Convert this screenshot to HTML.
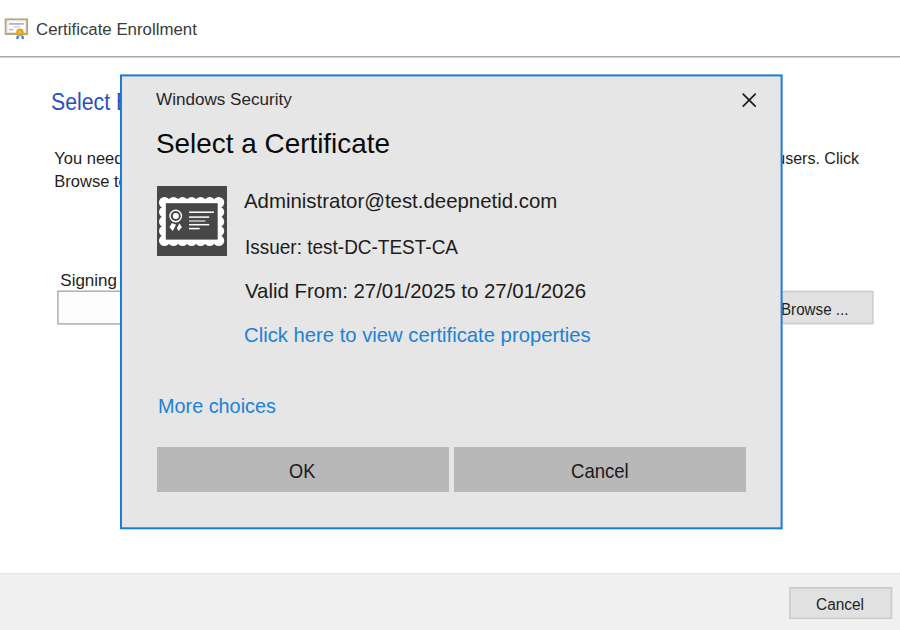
<!DOCTYPE html>
<html><head><meta charset="utf-8"><style>
html,body{margin:0;padding:0;}
body{width:900px;height:630px;overflow:hidden;background:#fff;position:relative;font-family:"Liberation Sans",sans-serif;}
.t{position:absolute;white-space:nowrap;line-height:1;transform-origin:0 0;}
.abs{position:absolute;}
</style></head><body>
<svg class="abs" style="left:0;top:10px" width="34" height="34" viewBox="0 10 34 34">
<rect x="5.7" y="19.4" width="21.4" height="14.6" fill="#fff" stroke="#b7a786" stroke-width="2"/>
<rect x="7.2" y="20.9" width="18.4" height="11.6" fill="none" stroke="#ece6da" stroke-width="1"/>
<line x1="9" y1="23.9" x2="23.7" y2="23.9" stroke="#a9b2dc" stroke-width="1.8"/>
<line x1="13.7" y1="26.8" x2="20" y2="26.8" stroke="#d2d5e4" stroke-width="1.5"/>
<line x1="9" y1="29.6" x2="13.3" y2="29.6" stroke="#aeb6dc" stroke-width="1.5"/>
<ellipse cx="17.6" cy="37.3" rx="1.3" ry="2.1" transform="rotate(18 17.6 37.3)" fill="#3f7eee"/>
<ellipse cx="22.6" cy="37.2" rx="1.3" ry="2.1" transform="rotate(-18 22.6 37.2)" fill="#3f7eee"/>
<circle cx="19.95" cy="32.4" r="3.8" fill="#dea61a"/>
<circle cx="19.6" cy="32" r="1.7" fill="#ecbe3e"/>
</svg>
<div class="t" style="left:36.00px;top:21.58px;font-size:16.8px;color:#3a3a3a;transform:scaleX(1.0025);">Certificate Enrollment</div>
<div class="abs" style="left:0;top:56px;width:900px;height:1px;background:#a9a9a9"></div>
<div class="abs" style="left:0;top:57px;width:900px;height:1px;background:#d0d0d0"></div>
<div class="t" style="left:51.30px;top:91.41px;font-size:23.5px;color:#2a4fb8;transform:scaleX(0.9050);">Select Enrollment Policy</div>
<div class="t" style="left:54.30px;top:150.03px;font-size:16.5px;color:#1e1e1e;transform:scaleX(1.0000);">You need to enroll on behalf of other users. Click</div>
<div class="t" style="left:54.30px;top:173.13px;font-size:16.5px;color:#1e1e1e;transform:scaleX(1.0000);">Browse to select</div>
<div class="t" style="left:776.32px;top:151.06px;font-size:16px;color:#1e1e1e;transform:scaleX(1.0000);">users. Click</div>
<div class="t" style="left:60.30px;top:271.81px;font-size:17px;color:#1e1e1e;transform:scaleX(1.0000);">Signing certificate:</div>
<svg class="abs" style="left:0;top:0" width="900" height="630"><rect x="57.9" y="291.2" width="640" height="32.7" fill="#fdfdfd" stroke="#b4b4b4" stroke-width="1.6"/><rect x="760" y="291.5" width="112.9" height="32.1" fill="#e1e1e1" stroke="#cccccc" stroke-width="1.6"/></svg>
<div class="t" style="left:780.50px;top:301.78px;font-size:16.8px;color:#1e1e1e;transform:scaleX(0.9037);">Browse ...</div>
<div class="abs" style="left:0;top:573px;width:900px;height:57px;background:#f0f0f0;border-top:1px solid #e8e8e8;box-sizing:border-box"></div>
<svg class="abs" style="left:0;top:0" width="900" height="630"><rect x="789.9" y="587.8" width="101.6" height="30.5" fill="#e1e1e1" stroke="#cbcbcb" stroke-width="1.6"/></svg>
<div class="t" style="left:816.00px;top:597.06px;font-size:16px;color:#1e1e1e;transform:scaleX(0.9638);">Cancel</div>
<svg class="abs" style="left:0;top:0" width="900" height="630"><rect x="121" y="75.4" width="660.6" height="452.9" fill="#e6e6e6" stroke="#1a7bd9" stroke-width="2"/></svg>
<div class="t" style="left:156.30px;top:91.98px;font-size:16.8px;color:#262626;transform:scaleX(1.0187);">Windows Security</div>
<svg class="abs" style="left:738px;top:89px" width="22" height="22" viewBox="0 0 22 22">
<path d="M5.2 5.2 L17.2 17.2 M17.2 5.2 L5.2 17.2" stroke="#1a1a1a" stroke-width="1.7" stroke-linecap="round" fill="none"/></svg>
<div class="t" style="left:156.10px;top:129.90px;font-size:28px;color:#0a0a0a;transform:scaleX(0.9958);">Select a Certificate</div>
<svg class="abs" style="left:157px;top:186px" width="70" height="70" viewBox="0 0 70 70">
<rect x="0" y="0" width="70" height="70" fill="#474747"/>
<g fill="#fff"><rect x="7.5" y="16.5" width="54.2" height="38.1"/><circle cx="7.50" cy="16.50" r="5.5"/><circle cx="7.50" cy="54.60" r="5.5"/><circle cx="16.53" cy="16.50" r="5.5"/><circle cx="16.53" cy="54.60" r="5.5"/><circle cx="25.57" cy="16.50" r="5.5"/><circle cx="25.57" cy="54.60" r="5.5"/><circle cx="34.60" cy="16.50" r="5.5"/><circle cx="34.60" cy="54.60" r="5.5"/><circle cx="43.63" cy="16.50" r="5.5"/><circle cx="43.63" cy="54.60" r="5.5"/><circle cx="52.67" cy="16.50" r="5.5"/><circle cx="52.67" cy="54.60" r="5.5"/><circle cx="61.70" cy="16.50" r="5.5"/><circle cx="61.70" cy="54.60" r="5.5"/><circle cx="7.50" cy="26.02" r="5.5"/><circle cx="61.70" cy="26.02" r="5.5"/><circle cx="7.50" cy="35.55" r="5.5"/><circle cx="61.70" cy="35.55" r="5.5"/><circle cx="7.50" cy="45.08" r="5.5"/><circle cx="61.70" cy="45.08" r="5.5"/></g>
<rect x="8.8" y="17.2" width="51.9" height="36.4" fill="#474747"/>
<circle cx="18.7" cy="30" r="5.7" fill="none" stroke="#fff" stroke-width="1.4"/>
<circle cx="18.8" cy="30" r="3" fill="#fff"/>
<path d="M12.4 41.2 L14.9 37 L19.1 38.7 L15.8 45.1 Z M22.4 37.3 L24.9 41.2 L21.6 45.1 L19.9 42.3 Z" fill="#fff"/>
<g stroke="#fff" stroke-width="1.5">
<line x1="32" y1="26.2" x2="56.9" y2="26.2"/>
<line x1="32" y1="31.1" x2="52.2" y2="31.1"/>
<line x1="32" y1="35" x2="48.3" y2="35" stroke="#c8c8c8"/>
<line x1="32" y1="38.7" x2="52.2" y2="38.7"/>
<line x1="32" y1="42.6" x2="42.7" y2="42.6"/>
</g>
</svg>
<div class="t" style="left:244.40px;top:191.48px;font-size:20.7px;color:#1c1c1c;transform:scaleX(0.9863);">Administrator@test.deepnetid.com</div>
<div class="t" style="left:244.80px;top:236.95px;font-size:20.5px;color:#1c1c1c;transform:scaleX(0.9257);">Issuer: test-DC-TEST-CA</div>
<div class="t" style="left:244.60px;top:280.96px;font-size:20.6px;color:#1c1c1c;transform:scaleX(0.9909);">Valid From: 27/01/2025 to 27/01/2026</div>
<div class="t" style="left:244.00px;top:325.32px;font-size:20.3px;color:#2081d9;transform:scaleX(0.9986);">Click here to view certificate properties</div>
<div class="t" style="left:158.10px;top:397.34px;font-size:19.8px;color:#2081d9;transform:scaleX(1.0021);">More choices</div>
<div class="abs" style="left:157px;top:447px;width:291.5px;height:45px;background:#b8b8b8"></div>
<div class="abs" style="left:454px;top:447px;width:292px;height:45px;background:#b8b8b8"></div>
<div class="t" style="left:289.05px;top:460.92px;font-size:20.3px;color:#1a1a1a;transform:scaleX(0.8967);">OK</div>
<div class="t" style="left:571.10px;top:460.92px;font-size:20.3px;color:#1a1a1a;transform:scaleX(0.9147);">Cancel</div>
</body></html>
